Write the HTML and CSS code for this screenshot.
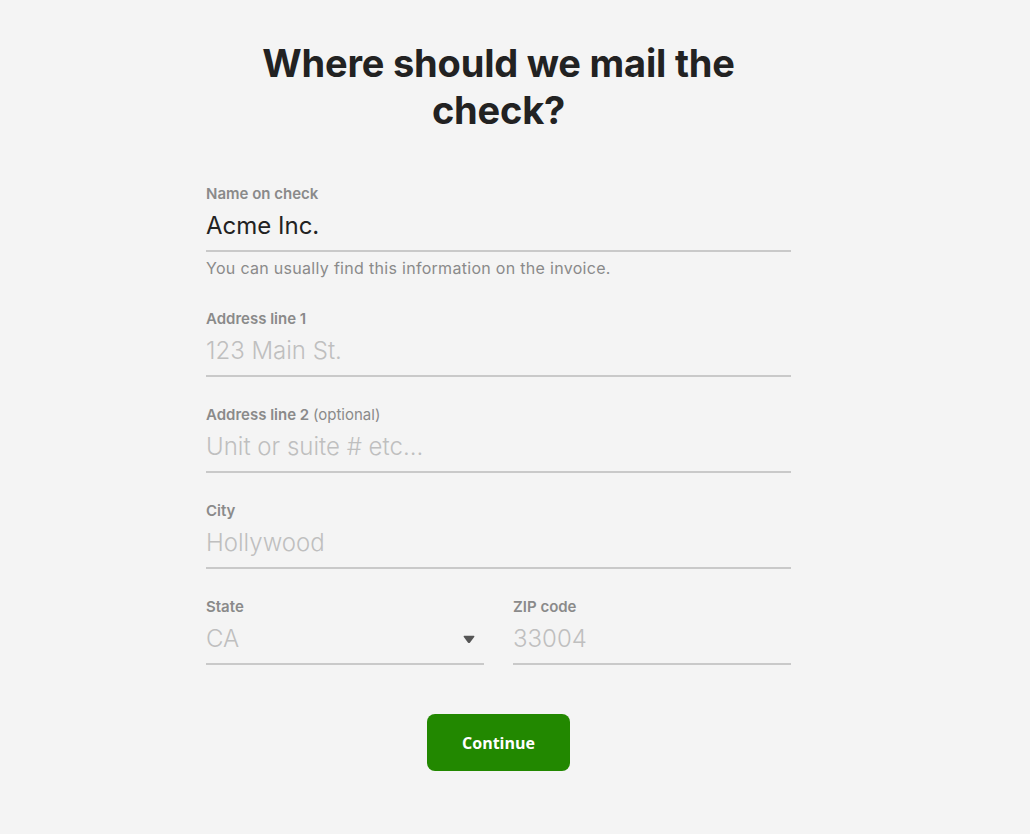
FILE: index.html
```html
<!DOCTYPE html>
<html lang="en">
<head>
<meta charset="utf-8">
<title>Where should we mail the check?</title>
<link rel="stylesheet" href="styles.css">
</head>
<body>
<main class="page">
  <h1 class="title">Where should we mail the<br>check?</h1>
  <form class="form">
    <div class="field">
      <label class="label">Name on check</label>
      <div class="control"><span class="value">Acme Inc.</span></div>
      <p class="help">You can usually find this information on the invoice.</p>
    </div>
    <div class="field">
      <label class="label">Address line 1</label>
      <div class="control"><span class="placeholder">123 Main St.</span></div>
    </div>
    <div class="field">
      <label class="label">Address line 2 <span class="optional">(optional)</span></label>
      <div class="control"><span class="placeholder">Unit or suite # etc...</span></div>
    </div>
    <div class="field">
      <label class="label">City</label>
      <div class="control"><span class="placeholder">Hollywood</span></div>
    </div>
    <div class="row">
      <div class="field">
        <label class="label">State</label>
        <div class="control select"><span class="placeholder">CA</span>
          <svg class="caret" width="12" height="9" viewBox="0 0 12 9"><path d="M1.4 0.8 H10.6 Q12 0.8 11.2 2.1 L7.1 7.5 Q6 8.7 4.9 7.5 L0.8 2.1 Q0 0.8 1.4 0.8 Z" fill="#555"/></svg>
        </div>
      </div>
      <div class="field">
        <label class="label">ZIP code</label>
        <div class="control"><span class="placeholder">33004</span></div>
      </div>
    </div>
    <div class="actions">
      <button type="button" class="btn">Continue</button>
    </div>
  </form>
</main>
</body>
</html>
```
FILE: styles.css
```css
html, body {
  margin: 0;
  padding: 0;
  background: #f4f4f4;
}
body {
  font-family: Inter, "Liberation Sans", sans-serif;
  color: #222;
}
.page {
  width: 585px;
  margin-left: 206px;
  padding-top: 40px;
}
.title {
  margin: 0;
  text-align: center;
  font-size: 38px;
  line-height: 47px;
  font-weight: 700;
  color: #222;
  letter-spacing: -0.2px;
}
.form {
  margin-top: 51px;
}
.field {
  display: flex;
  flex-direction: column;
  margin-bottom: 29px;
}
.label {
  font-size: 15px;
  line-height: 18px;
  font-weight: 600;
  color: #8a8a8a;
}
.optional {
  font-weight: 400;
}
.control {
  display: flex;
  align-items: center;
  height: 40px;
  padding-top: 7px;
  border-bottom: 2px solid #c9c9c9;
  font-size: 24px;
  line-height: 30px;
}
.control > span {
  align-self: flex-start;
  margin-top: 1px;
}
.value {
  color: #222;
}
.placeholder {
  color: #bfbfbf;
  font-weight: 300;
}
.select {
  justify-content: space-between;
}
.caret {
  margin-right: 9px;
  margin-bottom: 8px;
}
.help {
  margin: 6px 0 3px;
  font-size: 16px;
  line-height: 20px;
  letter-spacing: 0.3px;
  color: #8a8a8a;
}
.row {
  display: grid;
  grid-template-columns: 1fr 1fr;
  column-gap: 29px;
}
.actions {
  display: flex;
  justify-content: center;
  margin-top: 20px;
}
.btn {
  width: 143px;
  height: 57px;
  border: none;
  border-radius: 8px;
  background: #228800;
  color: #fff;
  font-family: "Open Sans", Inter, sans-serif;
  font-size: 16px;
  font-weight: 700;
}
```
